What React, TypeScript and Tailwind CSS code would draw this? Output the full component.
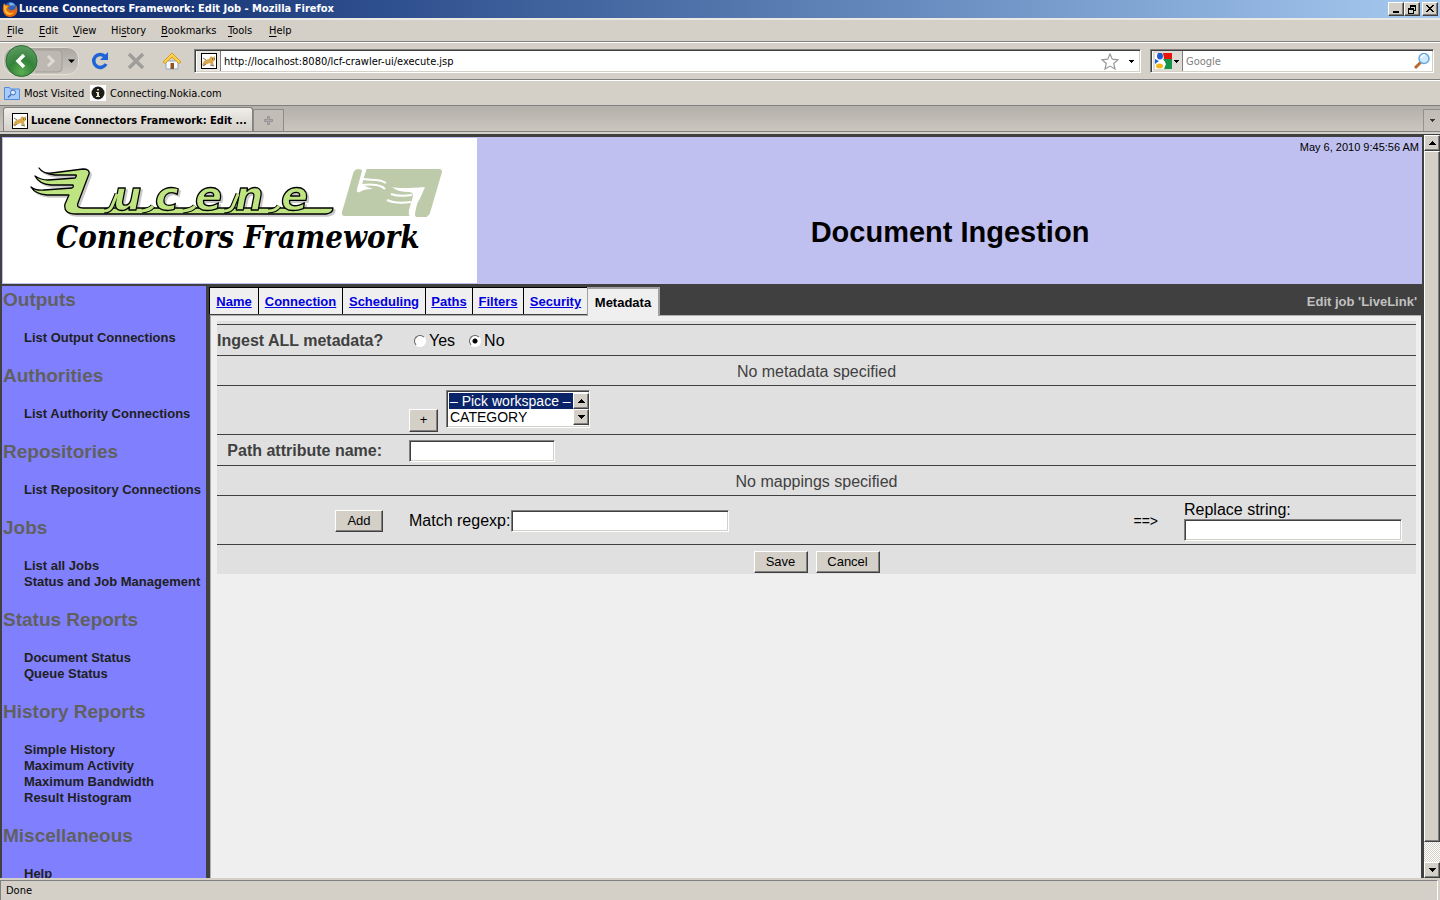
import type { ReactNode } from "react";

const raised =
  "bg-[#d4d0c8] border border-t-white border-l-white border-r-[#404040] border-b-[#404040] shadow-[inset_-1px_-1px_0_#808080]";
const sunken =
  "border border-t-[#808080] border-l-[#808080] border-r-white border-b-white shadow-[inset_1px_1px_0_#404040,inset_-1px_-1px_0_#d4d0c8]";
const chromeText = "font-['DejaVu_Sans_Condensed','DejaVu_Sans',sans-serif] text-[11px]";

function Arrow({ up = false }: { up?: boolean }) {
  return (
    <svg width="7" height="4" viewBox="0 0 7 4" shapeRendering="crispEdges" aria-hidden="true">
      <path d={up ? "M3 0h1v1h1v1h1v1h1v1H0V3h1V2h1V1h1z" : "M0 0h7v1H6v1H5v1H4v1H3V3H2V2H1V1H0z"} />
    </svg>
  );
}

function SmallArrow() {
  return (
    <svg width="5" height="3" viewBox="0 0 5 3" shapeRendering="crispEdges" aria-hidden="true">
      <path d="M0 0h5v1H4v1H3v1H2V2H1V1H0z" />
    </svg>
  );
}

function CatIcon() {
  return (
    <svg width="16" height="16" viewBox="0 0 16 16" aria-hidden="true">
      <rect x=".5" y=".5" width="15" height="15" fill="#fff" stroke="#000" />
      <path d="M3 8q3-2 5-2l2-3 1 1h2l1-1v4l-2 2 1 4h-2l-2-3-3 1-3 2-2-1z" fill="#d9a94e" />
      <path d="M2 5l3 2M5 11l-3 2M9 12l4 1" fill="none" stroke="#77756c" />
      <path d="M11 6h1m1 0h1" stroke="#5d3b10" />
    </svg>
  );
}

function FirefoxIcon() {
  return (
    <svg width="16" height="16" viewBox="0 0 16 16" aria-hidden="true">
      <circle cx="8.500" cy="7" r="6" fill="#2f62b8" />
      <path d="M7 2c3-1 5 0 6 3-2-1-3-1-5 0z" fill="#7db4ea" />
      <path d="M2 2c0 1 1 1 2 2 2 0 3 0 4 1L6 7c1 2 3 3 5 2 2 0 3-2 3-5 3 5 1 12-6 12C2 16-1 9 2 2z" fill="#e66a12" />
      <path d="M2 3c1 2 2 2 4 2L4 8c1 4 5 5 8 3-3 5-10 3-10-3z" fill="#fbb82b" />
    </svg>
  );
}

function TitleButton({ label, children }: { label: string; children: ReactNode }) {
  return (
    <button type="button" aria-label={label} className={`${raised} flex h-3.5 w-4 items-center justify-center`}>
      <svg width="10" height="10" viewBox="0 0 10 10" fill="none" stroke="#000" shapeRendering="crispEdges">
        {children}
      </svg>
    </button>
  );
}

function TitleBar() {
  return (
    <div className="flex h-[18px] shrink-0 items-center bg-linear-to-r from-[#0a246a] to-[#a6caf0] pr-0.5 pl-0.5">
      <FirefoxIcon />
      <h1 className="ml-px flex-1 pt-px font-bold text-white">
        Lucene Connectors Framework: Edit Job - Mozilla Firefox
      </h1>
      <TitleButton label="Minimize">
        <path d="M2 8h6" strokeWidth="2" />
      </TitleButton>
      <TitleButton label="Restore">
        <path d="M3 1h6M3 2h6M3.500 1v3M8.500 1v5M6 6.500h3M1 4h6M1 5h6M1.500 4v5M6.500 4v5M1 9.500h6" />
      </TitleButton>
      <span className="w-0.5" />
      <TitleButton label="Close">
        <path d="M1 1l7 7M2 1l7 7M8 1L1 8M9 1L2 8" shapeRendering="auto" />
      </TitleButton>
    </div>
  );
}

const menus = [
  { pre: "", key: "F", post: "ile", width: "w-8" },
  { pre: "", key: "E", post: "dit", width: "w-[34px]" },
  { pre: "", key: "V", post: "iew", width: "w-[38px]" },
  { pre: "Hi", key: "s", post: "tory", width: "w-[50px]" },
  { pre: "", key: "B", post: "ookmarks", width: "w-[67px]" },
  { pre: "", key: "T", post: "ools", width: "w-[41px]" },
  { pre: "", key: "H", post: "elp", width: "w-9" },
];

function MenuBar() {
  return (
    <nav className="flex h-6 shrink-0 items-center border-t-2 border-b border-t-[#ece9e4] border-b-[#808080] pt-0.5 pl-[7px]">
      {menus.map((m) => (
        <button key={m.key + m.post} type="button" className={`${m.width} text-left whitespace-nowrap`}>
          {m.pre}
          <span className="underline underline-offset-2">{m.key}</span>
          {m.post}
        </button>
      ))}
    </nav>
  );
}

function NavBar() {
  return (
    <div className="flex h-[38px] shrink-0 items-center border-t border-b border-t-white border-b-[#808080] pr-1.5 pl-[3px]">
      <svg width="78" height="34" viewBox="0 0 78 34" role="img" aria-label="Back and forward">
        <defs>
          <radialGradient id="back" cx=".5" cy=".85" r=".8">
            <stop offset="0" stopColor="#5cae52" />
            <stop offset=".5" stopColor="#33823a" />
            <stop offset="1" stopColor="#5b9a60" />
          </radialGradient>
          <linearGradient id="pill" x2="0" y2="1">
            <stop offset="0" stopColor="#aaa7a1" />
            <stop offset="1" stopColor="#cdc9c1" />
          </linearGradient>
        </defs>
        <rect x=".5" y="3.500" width="75" height="27" rx="11" fill="url(#pill)" stroke="#e4e1db" />
        <path d="M32 6h23q4 0 4 4v14q0 4-4 4H32" fill="#bdb9b2" stroke="#a09d97" />
        <path d="M45 12l5 5-5 5" fill="none" stroke="#dedbd5" strokeWidth="3" />
        <circle cx="18.500" cy="17" r="15.500" fill="url(#back)" stroke="#2b6b35" />
        <path d="M21 11l-6 6 6 6" fill="none" stroke="#fff" strokeWidth="3.500" />
        <path d="M65 15.500h7L68.500 19z" />
      </svg>
      <button type="button" aria-label="Reload" className="ml-2">
        <svg width="22" height="20" viewBox="0 0 22 20">
          <path d="M16 5.500a6.500 6.500 0 1 0 1 7.500" fill="none" stroke="#1f64d6" strokeWidth="3.500" />
          <path d="M19 1v8h-8z" fill="#1f64d6" />
        </svg>
      </button>
      <button type="button" aria-label="Stop" className="ml-3.5">
        <svg width="22" height="20" viewBox="0 0 22 20">
          <path d="M4 3l14 14M18 3L4 17" stroke="#9f9d99" strokeWidth="3.500" />
        </svg>
      </button>
      <button type="button" aria-label="Home" className="ml-3.5">
        <svg width="22" height="20" viewBox="0 0 22 20">
          <path d="M5 10h12v8H5z" fill="#f6f8fb" stroke="#93a5bd" />
          <path d="M11 2l9 9-2 1.500-7-6.500-7 6.500L2 11z" fill="#fcd24d" stroke="#d99b1c" />
          <path d="M9.500 12h3.500v6H9.500z" fill="#8d5526" />
        </svg>
      </button>
      <div className={`${sunken} ml-[11px] flex h-6 flex-1 items-center bg-white p-0.5`}>
        <span className="flex h-5 w-6 shrink-0 items-center justify-center border-r border-[#808080] bg-[#e8e6e1]">
          <CatIcon />
        </span>
        <input
          aria-label="Address"
          defaultValue="http://localhost:8080/lcf-crawler-ui/execute.jsp"
          className="min-w-0 flex-1 bg-transparent pt-0.5 pl-[3px] outline-none"
        />
        <svg width="18" height="17" viewBox="0 0 18 17" aria-hidden="true">
          <path
            d="M9 1l2.300 5.200 5.700.6-4.300 3.700 1.300 5.500-5-2.900L4 16l1.300-5.500L1 6.800l5.700-.6z"
            fill="#fff"
            stroke="#999"
            strokeWidth="1.200"
          />
        </svg>
        <span className="mr-1 ml-2.5">
          <SmallArrow />
        </span>
      </div>
      <div className={`${sunken} ml-[9px] flex h-6 w-[284px] items-center bg-white p-0.5`}>
        <button
          type="button"
          aria-label="Search engine"
          className="flex h-5 w-[30px] shrink-0 items-center gap-0.5 border-r border-[#808080] bg-[#dedbd5] pl-0.5"
        >
          <svg width="17" height="16" viewBox="0 0 17 16">
            <path d="M0 0h17v16H0z" fill="#fff" />
            <path d="M8 0h9v6H9z" fill="#e8140c" />
            <path d="M8 6h9v10H9l2-5z" fill="#169548" />
            <path d="M0 6l4 2-4 3z" fill="#1a5fd0" />
            <ellipse cx="5" cy="3" rx="3" ry="3.500" fill="#1a5fd0" />
            <path d="M5 7q6 0 5 4l-2-1z" fill="#fff" />
            <ellipse cx="4.500" cy="13" rx="3.500" ry="2.500" fill="#f4b816" />
          </svg>
          <SmallArrow />
        </button>
        <input
          aria-label="Search"
          placeholder="Google"
          className="min-w-0 flex-1 pt-0.5 pl-[3px] outline-none placeholder:text-[#808080]"
        />
        <svg width="18" height="18" viewBox="0 0 18 18" aria-hidden="true">
          <path d="M8 10l-6 6" stroke="#bd6b2c" strokeWidth="3" />
          <circle cx="11" cy="6.500" r="5" fill="#cfeafc" stroke="#69a8df" strokeWidth="1.500" />
          <path d="M8 6q1-3 4-3" fill="none" stroke="#fff" strokeWidth="1.500" />
        </svg>
      </div>
    </div>
  );
}

function BookmarksBar() {
  return (
    <div className="flex h-[26px] shrink-0 items-center border-t border-b border-t-white border-b-[#808080] pl-1">
      <a href="#most-visited" className="flex w-[86px] items-center gap-1 whitespace-nowrap">
        <svg width="16" height="14" viewBox="0 0 16 14" aria-hidden="true">
          <path d="M.5 1.500h5l1 1.500h9v10.500H.5z" fill="#a9cbf8" stroke="#4f8be0" />
          <circle cx="9" cy="6.500" r="2.500" fill="#d9eafe" stroke="#3e6fc4" />
          <path d="M7 8.500l-3 3" stroke="#3e6fc4" strokeWidth="1.500" />
        </svg>
        <span className="pt-0.5">Most Visited</span>
      </a>
      <a href="#connecting" className="flex items-center gap-1 whitespace-nowrap">
        <svg width="16" height="16" viewBox="0 0 16 16" aria-hidden="true">
          <path d="M0 0h16v16H0z" fill="#fff" />
          <circle cx="8" cy="8" r="6.500" fill="#1c1d18" />
          <path d="M7 4h2v1.500H7zM6 7h3v4h1v1H6v-1h1V8H6z" fill="#e5e3c8" />
        </svg>
        <span className="pt-0.5">Connecting.Nokia.com</span>
      </a>
    </div>
  );
}

function TabStrip() {
  return (
    <div className="flex h-[26px] shrink-0 items-end border-b border-[#808080] bg-linear-to-b from-[#b3b0a9] to-[#cbc7bf] pl-[3px]">
      <button
        type="button"
        className="flex h-6 w-[250px] items-center gap-[3px] rounded-t-[3px] border border-b-0 border-[#808080] bg-linear-to-b from-[#f0eeeb] to-[#d4d0c8] pt-0.5 pl-2 font-bold whitespace-nowrap"
      >
        <CatIcon />
        <span className="pt-px">Lucene Connectors Framework: Edit ...</span>
      </button>
      <button
        type="button"
        aria-label="New tab"
        className="flex h-[22px] w-[31px] items-center justify-center border border-b-0 border-[#8f8c86] bg-[#c2beb7]"
      >
        <svg width="9" height="9" viewBox="0 0 9 9">
          <path d="M3.500.5h2v3h3v2h-3v3h-2v-3h-3v-2h3z" fill="#aaa" stroke="#888" strokeWidth=".7" />
        </svg>
      </button>
      <span className="flex-1" />
      <button
        type="button"
        aria-label="List all tabs"
        className="flex h-[22px] w-[17px] items-center justify-center border border-r-0 border-b-0 border-[#808080] bg-[#c6c2bb] opacity-70"
      >
        <SmallArrow />
      </button>
    </div>
  );
}

const wings =
  "M39 168q4 6 13 5l31-4q7 0 6 5l-11 29q-2 5 5 5h28h222q0 5-7 6H76q-13 0-11-10l4-9H47q-12-1-16-8q5 4 13 3l28-2q2-1 1-3H51q-12-1-16-9q6 4 13 4l27-2q2-2 1-3H55q-12-1-16-7z";
const joins =
  "M104 211q6 0 8-5l5-12M142 211q8-1 11-5M183 211q9-1 12-5M224 211q7 0 9-5l5-12M268 211q8 0 11-5";

/* Winged wordmark riding on its baseline flourish, with the emblem beside it. */
function Logo() {
  return (
    <div className="flex h-full w-[476px] shrink-0 border border-[#c0c0f0] bg-white">
      <svg width="474" height="145" viewBox="3 138 474 145" role="img" aria-label="Lucene Connectors Framework">
        <g className="drop-shadow-[2px_2px_0_#c8c8c8]" strokeLinejoin="round">
          <path d={wings} fill="#bfe583" stroke="#000" strokeWidth="1.300" />
          <path d={joins} fill="none" stroke="#000" strokeWidth="5" />
          <text
            x="113 155 195 235 281"
            y="210"
            fontFamily="'DejaVu Sans', sans-serif"
            fontStyle="italic"
            fontWeight="bold"
            fontSize="40"
            fill="#bfe583"
            stroke="#000"
            strokeWidth="1.300"
          >
            ucene
          </text>
          <path d={joins} fill="none" stroke="#bfe583" strokeWidth="3" />
        </g>
        <path
          d="M359 169h80q3 0 3 3l-12 41q-1 3-3 3h-82q-4 0-3-4l11-38q1-5 6-5z"
          fill="#bdcbab"
        />
        <path d="M359 168h8l-3 9-2 8 11 4q-10 0-13 3-4 1-3-3l5-18q0-2-4-2z" fill="#fff" />
        <path d="M392 187q8 2 33 0-2 5-5 12-5 5-3 18h-7q-2-3-1-7l4-14q0-4-4-4-12 0-17-5z" fill="#fff" />
        <path d="M424 190l-7 15q-2 7-2 10 0 2 3 2h9l3-8z" fill="#bdcbab" />
        <path
          d="M363 179q8 1 13 1t10 3M362 185q8-1 14 0t9 4M391 194q8 3 21 1M387 200q8 4 24 2"
          fill="none"
          stroke="#fff"
          strokeWidth="2"
        />
        <text
          x="56"
          y="248"
          fontSize="31"
          fontFamily="'DejaVu Serif Condensed', 'DejaVu Serif', serif"
          fontStyle="italic"
          fontWeight="bold"
        >
          Connectors Framework
        </text>
      </svg>
    </div>
  );
}

function Header() {
  return (
    <header className="flex h-[147px] shrink-0 bg-[#c0c0f0]">
      <Logo />
      <div className="flex flex-1 flex-col pt-0.5">
        <p className="pr-[3px] text-right text-[11px] leading-4 text-black">May 6, 2010 9:45:56 AM</p>
        <h2 className="mt-[57px] text-center text-[29px] leading-10 font-bold text-black">Document Ingestion</h2>
      </div>
    </header>
  );
}

const sections = [
  { title: "Outputs", links: ["List Output Connections"] },
  { title: "Authorities", links: ["List Authority Connections"] },
  { title: "Repositories", links: ["List Repository Connections"] },
  { title: "Jobs", links: ["List all Jobs", "Status and Job Management"] },
  { title: "Status Reports", links: ["Document Status", "Queue Status"] },
  {
    title: "History Reports",
    links: ["Simple History", "Maximum Activity", "Maximum Bandwidth", "Result Histogram"],
  },
  { title: "Miscellaneous", links: ["Help"] },
];

function Sidebar() {
  return (
    <nav className="w-[204px] shrink-0 overflow-hidden bg-[#8080ff] pt-[3px] pl-px">
      {sections.map((s) => (
        <section key={s.title} className="mb-[19px]">
          <h3 className="text-[19px] leading-[22px] font-bold text-[#606060]">{s.title}</h3>
          <ul className="mt-[19px] pl-[21px]">
            {s.links.map((l) => (
              <li key={l} className="text-[13px] leading-4 font-bold whitespace-nowrap text-[#202020]">
                <a href="#list">{l}</a>
              </li>
            ))}
          </ul>
        </section>
      ))}
    </nav>
  );
}

const tabs = [
  { name: "Name", width: "w-[49px]" },
  { name: "Connection", width: "w-[84px]" },
  { name: "Scheduling", width: "w-[83px]" },
  { name: "Paths", width: "w-[47px]" },
  { name: "Filters", width: "w-[51px]" },
  { name: "Security", width: "w-16" },
];

function JobTabs() {
  return (
    <div className="flex h-[29px] shrink-0 items-stretch pt-px pr-1 text-[13px] font-bold">
      {tabs.map((t) => (
        <a
          key={t.name}
          href="#tab"
          className={`${t.width} mb-px border-t border-l border-black bg-[#efefef] text-center leading-[27px] text-[#0000e0] underline`}
        >
          {t.name}
        </a>
      ))}
      <span className="z-10 -mb-px w-[73px] border-t-2 border-r-2 border-l border-[#a0a0a0] bg-[#efefef] text-center leading-[27px] text-black">
        Metadata
      </span>
      <span className="flex-1 text-right leading-[29px] text-[#c0c0c0]">Edit job 'LiveLink'</span>
    </div>
  );
}

const row = "flex items-center border-t border-[#404040]";
const label = "w-[165px] shrink-0 text-right font-bold whitespace-nowrap text-[#404040]";
const button = `${raised} text-[13px] leading-5 text-black`;
const radio =
  "size-3 appearance-none rounded-full border border-t-[#606060] border-l-[#606060] border-r-white border-b-white bg-white checked:bg-[radial-gradient(circle,#000_2px,#fff_3px)]";
const option =
  "h-4 min-h-0 p-0 pl-px leading-4 checked:bg-[linear-gradient(#0a246a,#0a246a)] checked:[-webkit-text-fill-color:#fff]";

function WorkspaceList() {
  return (
    <div className={`${sunken} flex h-[38px] w-36 bg-white py-0.5 pl-0.5`}>
      <select
        size={2}
        aria-label="Workspace"
        defaultValue="pick"
        className="h-8 min-w-0 flex-1 appearance-none overflow-hidden text-[14px] outline-none"
      >
        <option value="pick" className={option}>
          – Pick workspace –
        </option>
        <option value="category" className={option}>
          CATEGORY
        </option>
      </select>
      <div className="flex w-4 flex-col justify-between bg-[#eae8e4]">
        <button type="button" aria-label="Scroll up" className={`${raised} flex h-4 items-center justify-center`}>
          <Arrow up />
        </button>
        <button type="button" aria-label="Scroll down" className={`${raised} flex h-4 items-center justify-center`}>
          <Arrow />
        </button>
      </div>
    </div>
  );
}

function MetadataForm() {
  return (
    <form className="mx-[5px] mt-[5px] ml-1.5 bg-[#e0e0e0] pt-[3px] text-[16px] leading-5 text-black">
      <fieldset className={`${row} h-[31px] pt-0.5`}>
        <span className={label}>Ingest ALL metadata?</span>
        <label className="ml-8 flex items-center gap-[3px]">
          <input type="radio" name="all" className={radio} />
          Yes
        </label>
        <label className="ml-3.5 flex items-center gap-[3px]">
          <input type="radio" name="all" defaultChecked className={radio} />
          No
        </label>
      </fieldset>
      <p className={`${row} h-[30px] justify-center pt-0.5 text-[#404040]`}>No metadata specified</p>
      <div className={`${row} h-[49px] pl-48`}>
        <button type="button" className={`${button} mt-5 h-[23px] w-[29px] text-[11px]`}>
          +
        </button>
        <div className="mb-0.5 ml-2">
          <WorkspaceList />
        </div>
      </div>
      <div className={`${row} h-[31px] pt-0.5`}>
        <label htmlFor="path-attribute" className={label}>
          Path attribute name:
        </label>
        <input id="path-attribute" className={`${sunken} ml-[27px] h-[22px] w-[146px] bg-white px-1`} />
      </div>
      <p className={`${row} h-[30px] justify-center pt-0.5 text-[#404040]`}>No mappings specified</p>
      <div className={`${row} h-[49px] pt-px pr-3.5`}>
        <div className="flex w-[166px] shrink-0 justify-end">
          <button type="button" className={`${button} h-[22px] w-12`}>
            Add
          </button>
        </div>
        <label htmlFor="match" className="ml-[26px] w-[102px] whitespace-nowrap">
          Match regexp:
        </label>
        <input id="match" className={`${sunken} h-[22px] w-[218px] bg-white px-1`} />
        <span className="flex-1" />
        <span className="mr-[26px] text-[14px]">==&gt;</span>
        <div className="flex flex-col">
          <label htmlFor="replace" className="leading-[18px]">
            Replace string:
          </label>
          <input id="replace" className={`${sunken} h-[22px] w-[218px] bg-white px-1`} />
        </div>
      </div>
      <div className={`${row} h-[30px] justify-center gap-2 pt-1`}>
        <button type="button" className={`${button} h-[22px] w-[54px]`}>
          Save
        </button>
        <button type="button" className={`${button} h-[22px] w-16`}>
          Cancel
        </button>
      </div>
    </form>
  );
}

function PageScrollbar() {
  return (
    <div className="flex w-4 shrink-0 flex-col bg-[#eae8e4]">
      <button type="button" aria-label="Scroll page up" className={`${raised} flex h-4 items-center justify-center`}>
        <Arrow up />
      </button>
      <div className={`${raised} flex-1`} />
      <div className="h-5 bg-[repeating-conic-gradient(#fff_0_25%,#d4d0c8_0_50%)] bg-[length:2px_2px]" />
      <button type="button" aria-label="Scroll page down" className={`${raised} flex h-4 items-center justify-center`}>
        <Arrow />
      </button>
    </div>
  );
}

export default function App() {
  return (
    <div className={`${chromeText} flex h-screen flex-col overflow-hidden bg-[#d4d0c8] text-black`}>
      <TitleBar />
      <MenuBar />
      <NavBar />
      <BookmarksBar />
      <TabStrip />
      <div className="mt-0.5 flex min-h-0 flex-1 border-t border-[#404040] font-['Liberation_Sans',Arial,sans-serif]">
        <main className="flex min-w-0 flex-1 flex-col bg-[#404040] px-0.5 pt-0.5">
          <Header />
          <div className="mt-0.5 flex min-h-0 flex-1">
            <Sidebar />
            <div className="mr-px ml-[3px] flex min-w-0 flex-1 flex-col">
              <JobTabs />
              <div className="ml-px min-h-0 flex-1 overflow-hidden border-t border-l border-[#b0b0b0] bg-[#efefef]">
                <MetadataForm />
              </div>
            </div>
          </div>
        </main>
        <PageScrollbar />
      </div>
      <footer className="mt-0.5 mr-0.5 h-5 shrink-0 border-t border-r border-l border-t-[#808080] border-r-white border-l-[#808080] pl-[5px] leading-5">
        Done
      </footer>
    </div>
  );
}
